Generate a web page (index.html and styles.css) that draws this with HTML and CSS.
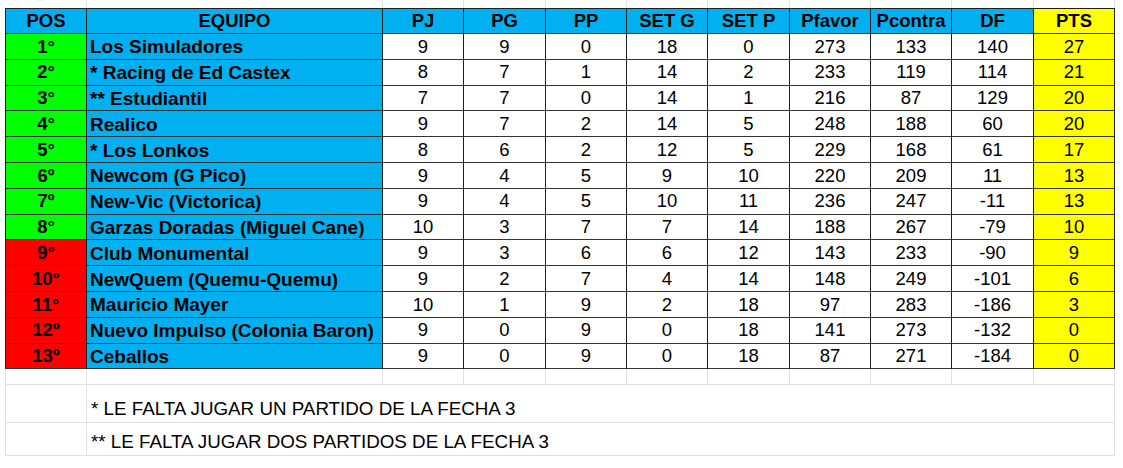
FILE: index.html
```html
<!DOCTYPE html>
<html lang="es">
<head>
<meta charset="utf-8">
<title>Tabla de posiciones</title>
<link rel="stylesheet" href="styles.css">
</head>
<body>
<div class="sheet">
  <div class="c strip first"></div><div class="c strip"></div><div class="c strip"></div><div class="c strip"></div><div class="c strip"></div><div class="c strip"></div><div class="c strip"></div><div class="c strip"></div><div class="c strip"></div><div class="c strip"></div><div class="c strip"></div>

  <div class="c hd first blue">POS</div><div class="c hd blue">EQUIPO</div><div class="c hd blue">PJ</div><div class="c hd blue">PG</div><div class="c hd blue">PP</div><div class="c hd blue">SET G</div><div class="c hd blue">SET P</div><div class="c hd blue">Pfavor</div><div class="c hd blue">Pcontra</div><div class="c hd blue">DF</div><div class="c hd yellow">PTS</div>

  <div class="c pos first green">1°</div><div class="c team blue">Los Simuladores</div><div class="c n">9</div><div class="c n">9</div><div class="c n">0</div><div class="c n">18</div><div class="c n">0</div><div class="c n">273</div><div class="c n">133</div><div class="c n">140</div><div class="c n yellow">27</div>
  <div class="c pos first green">2°</div><div class="c team blue">* Racing de Ed Castex</div><div class="c n">8</div><div class="c n">7</div><div class="c n">1</div><div class="c n">14</div><div class="c n">2</div><div class="c n">233</div><div class="c n">119</div><div class="c n">114</div><div class="c n yellow">21</div>
  <div class="c pos first green">3°</div><div class="c team blue">** Estudiantil</div><div class="c n">7</div><div class="c n">7</div><div class="c n">0</div><div class="c n">14</div><div class="c n">1</div><div class="c n">216</div><div class="c n">87</div><div class="c n">129</div><div class="c n yellow">20</div>
  <div class="c pos first green">4°</div><div class="c team blue">Realico</div><div class="c n">9</div><div class="c n">7</div><div class="c n">2</div><div class="c n">14</div><div class="c n">5</div><div class="c n">248</div><div class="c n">188</div><div class="c n">60</div><div class="c n yellow">20</div>
  <div class="c pos first green">5°</div><div class="c team blue">* Los Lonkos</div><div class="c n">8</div><div class="c n">6</div><div class="c n">2</div><div class="c n">12</div><div class="c n">5</div><div class="c n">229</div><div class="c n">168</div><div class="c n">61</div><div class="c n yellow">17</div>
  <div class="c pos first green">6º</div><div class="c team blue">Newcom (G Pico)</div><div class="c n">9</div><div class="c n">4</div><div class="c n">5</div><div class="c n">9</div><div class="c n">10</div><div class="c n">220</div><div class="c n">209</div><div class="c n">11</div><div class="c n yellow">13</div>
  <div class="c pos first green">7º</div><div class="c team blue">New-Vic (Victorica)</div><div class="c n">9</div><div class="c n">4</div><div class="c n">5</div><div class="c n">10</div><div class="c n">11</div><div class="c n">236</div><div class="c n">247</div><div class="c n">-11</div><div class="c n yellow">13</div>
  <div class="c pos first green">8°</div><div class="c team blue">Garzas Doradas (Miguel Cane)</div><div class="c n">10</div><div class="c n">3</div><div class="c n">7</div><div class="c n">7</div><div class="c n">14</div><div class="c n">188</div><div class="c n">267</div><div class="c n">-79</div><div class="c n yellow">10</div>
  <div class="c pos first red">9°</div><div class="c team blue">Club Monumental</div><div class="c n">9</div><div class="c n">3</div><div class="c n">6</div><div class="c n">6</div><div class="c n">12</div><div class="c n">143</div><div class="c n">233</div><div class="c n">-90</div><div class="c n yellow">9</div>
  <div class="c pos first red">10°</div><div class="c team blue">NewQuem (Quemu-Quemu)</div><div class="c n">9</div><div class="c n">2</div><div class="c n">7</div><div class="c n">4</div><div class="c n">14</div><div class="c n">148</div><div class="c n">249</div><div class="c n">-101</div><div class="c n yellow">6</div>
  <div class="c pos first red">11°</div><div class="c team blue">Mauricio Mayer</div><div class="c n">10</div><div class="c n">1</div><div class="c n">9</div><div class="c n">2</div><div class="c n">18</div><div class="c n">97</div><div class="c n">283</div><div class="c n">-186</div><div class="c n yellow">3</div>
  <div class="c pos first red">12º</div><div class="c team blue">Nuevo Impulso (Colonia Baron)</div><div class="c n">9</div><div class="c n">0</div><div class="c n">9</div><div class="c n">0</div><div class="c n">18</div><div class="c n">141</div><div class="c n">273</div><div class="c n">-132</div><div class="c n yellow">0</div>
  <div class="c pos first red">13º</div><div class="c team blue">Ceballos</div><div class="c n">9</div><div class="c n">0</div><div class="c n">9</div><div class="c n">0</div><div class="c n">18</div><div class="c n">87</div><div class="c n">271</div><div class="c n">-184</div><div class="c n yellow">0</div>

  <div class="c empty first"></div><div class="c empty"></div><div class="c empty"></div><div class="c empty"></div><div class="c empty"></div><div class="c empty"></div><div class="c empty"></div><div class="c empty"></div><div class="c empty"></div><div class="c empty"></div><div class="c empty"></div>

  <div class="c note first"></div><div class="c note text">* LE FALTA JUGAR UN PARTIDO DE LA FECHA 3</div>
  <div class="c note first"></div><div class="c note text">** LE FALTA JUGAR DOS PARTIDOS DE LA FECHA 3</div>
</div>
</body>
</html>
```

FILE: styles.css
```css
html, body {
  margin: 0;
  padding: 0;
  background: #ffffff;
}

body {
  font-family: "Liberation Sans", Arial, sans-serif;
  color: #000000;
}

.sheet {
  display: grid;
  grid-template-columns: 82px 296px 81px 82px 81px 81px 82px 81px 81px 82px 81px;
  grid-template-rows: 8px 26px repeat(13, 25.8px) 16px 38px 33px;
  margin-left: 5px;
  width: 1110px;
}

.c {
  box-sizing: border-box;
  border-right: 1px solid #1f1f1f;
  border-bottom: 1px solid #333333;
  display: flex;
  align-items: center;
  justify-content: center;
  white-space: nowrap;
  overflow: hidden;
  font-size: 18.5px;
  line-height: 1;
  padding-top: 1px;
}

.c.first {
  border-left: 1px solid #1f1f1f;
}

.strip {
  border-right-color: #e2e2e2;
  border-bottom: none;
  padding-top: 0;
}

.strip.first {
  border-left-color: transparent;
}

.hd {
  border-top: 1px solid #1f1f1f;
  font-weight: bold;
}

.pos {
  font-weight: bold;
}

.team {
  justify-content: flex-start;
  padding-left: 3px;
  font-weight: bold;
  font-size: 19px;
}

.blue {
  background: #00b0f0;
}

.green {
  background: #00ff00;
}

.red {
  background: #ff0000;
}

.yellow {
  background: #ffff00;
}

.empty,
.note {
  border-right-color: #e0e0e0;
  border-bottom-color: #e0e0e0;
}

.empty.first,
.note.first {
  border-left-color: #e0e0e0;
}

.note.text {
  grid-column: 2 / span 10;
  justify-content: flex-start;
  align-items: flex-end;
  padding-left: 4px;
  padding-bottom: 4px;
  font-size: 18.8px;
}
```
